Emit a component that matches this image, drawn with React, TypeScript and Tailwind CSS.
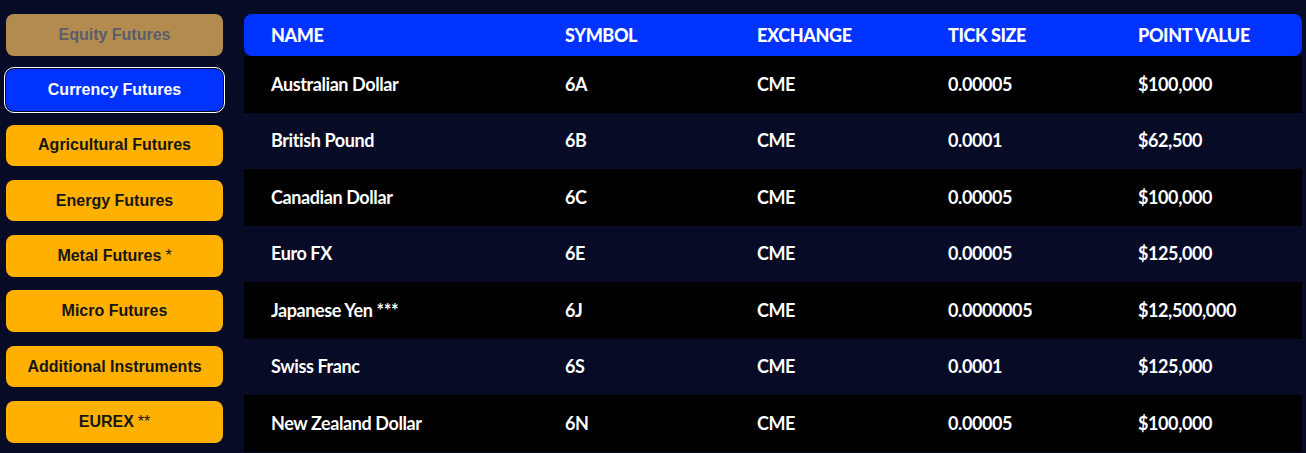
const categories = [
  { label: 'Equity Futures', mark: '', state: 'disabled' },
  { label: 'Currency Futures', mark: '', state: 'active' },
  { label: 'Agricultural Futures', mark: '', state: 'idle' },
  { label: 'Energy Futures', mark: '', state: 'idle' },
  { label: 'Metal Futures', mark: '*', state: 'idle' },
  { label: 'Micro Futures', mark: '', state: 'idle' },
  { label: 'Additional Instruments', mark: '', state: 'idle' },
  { label: 'EUREX', mark: '**', state: 'idle' },
];

const rows = [
  ['Australian Dollar', '6A', 'CME', '0.00005', '$100,000'],
  ['British Pound', '6B', 'CME', '0.0001', '$62,500'],
  ['Canadian Dollar', '6C', 'CME', '0.00005', '$100,000'],
  ['Euro FX', '6E', 'CME', '0.00005', '$125,000'],
  ['Japanese Yen ***', '6J', 'CME', '0.0000005', '$12,500,000'],
  ['Swiss Franc', '6S', 'CME', '0.0001', '$125,000'],
  ['New Zealand Dollar', '6N', 'CME', '0.00005', '$100,000'],
];

const headers = ['NAME', 'SYMBOL', 'EXCHANGE', 'TICK SIZE', 'POINT VALUE'];

function CategoryButton({ label, mark, state }: { label: string; mark: string; state: string }) {
  const styles =
    state === 'active'
      ? 'bg-[#0033ff] text-white outline-1 outline-offset-1 outline-white'
      : state === 'disabled'
        ? 'bg-[#b38b4f] text-[#5a5e6c]'
        : 'bg-[#ffb000] text-[#161616]';
  return (
    <button
      className={`h-[41.5px] w-full rounded-lg flex items-center justify-center gap-[4px] text-[16px] font-bold font-['Liberation_Sans',Arial,sans-serif] ${styles}`}
    >
      {label}
      {mark && <span className="font-normal">{mark}</span>}
    </button>
  );
}

export default function App() {
  return (
    <div className="min-h-[453px] w-full bg-[#070b26] flex gap-[21px] pl-[6px] pr-[4px] pt-[14px]">
      {/* Category list */}
      <div className="w-[217px] shrink-0 flex flex-col gap-[13.8px]">
        {categories.map((c) => (
          <CategoryButton key={c.label} label={c.label} mark={c.mark} state={c.state} />
        ))}
      </div>

      {/* Contract table */}
      <div className="flex-1 font-['Lato','Noto_Sans',sans-serif] text-white tracking-[-0.4px]">
        <div className="h-[42px] rounded-lg bg-[#0033ff] grid grid-cols-[294px_192px_191px_190px_1fr] items-center px-[27px] text-[18px] font-black">
          {headers.map((h) => (
            <div key={h}>{h}</div>
          ))}
        </div>
        {rows.map((r, i) => (
          <div
            key={r[0]}
            className={`h-[56.5px] grid grid-cols-[294px_192px_191px_190px_1fr] items-center px-[27px] text-[18px] font-bold ${
              i % 2 === 0 ? 'bg-black' : 'bg-[#070b26]'
            }`}
          >
            {r.map((cell, j) => (
              <div key={j}>{cell}</div>
            ))}
          </div>
        ))}
      </div>
    </div>
  );
}
